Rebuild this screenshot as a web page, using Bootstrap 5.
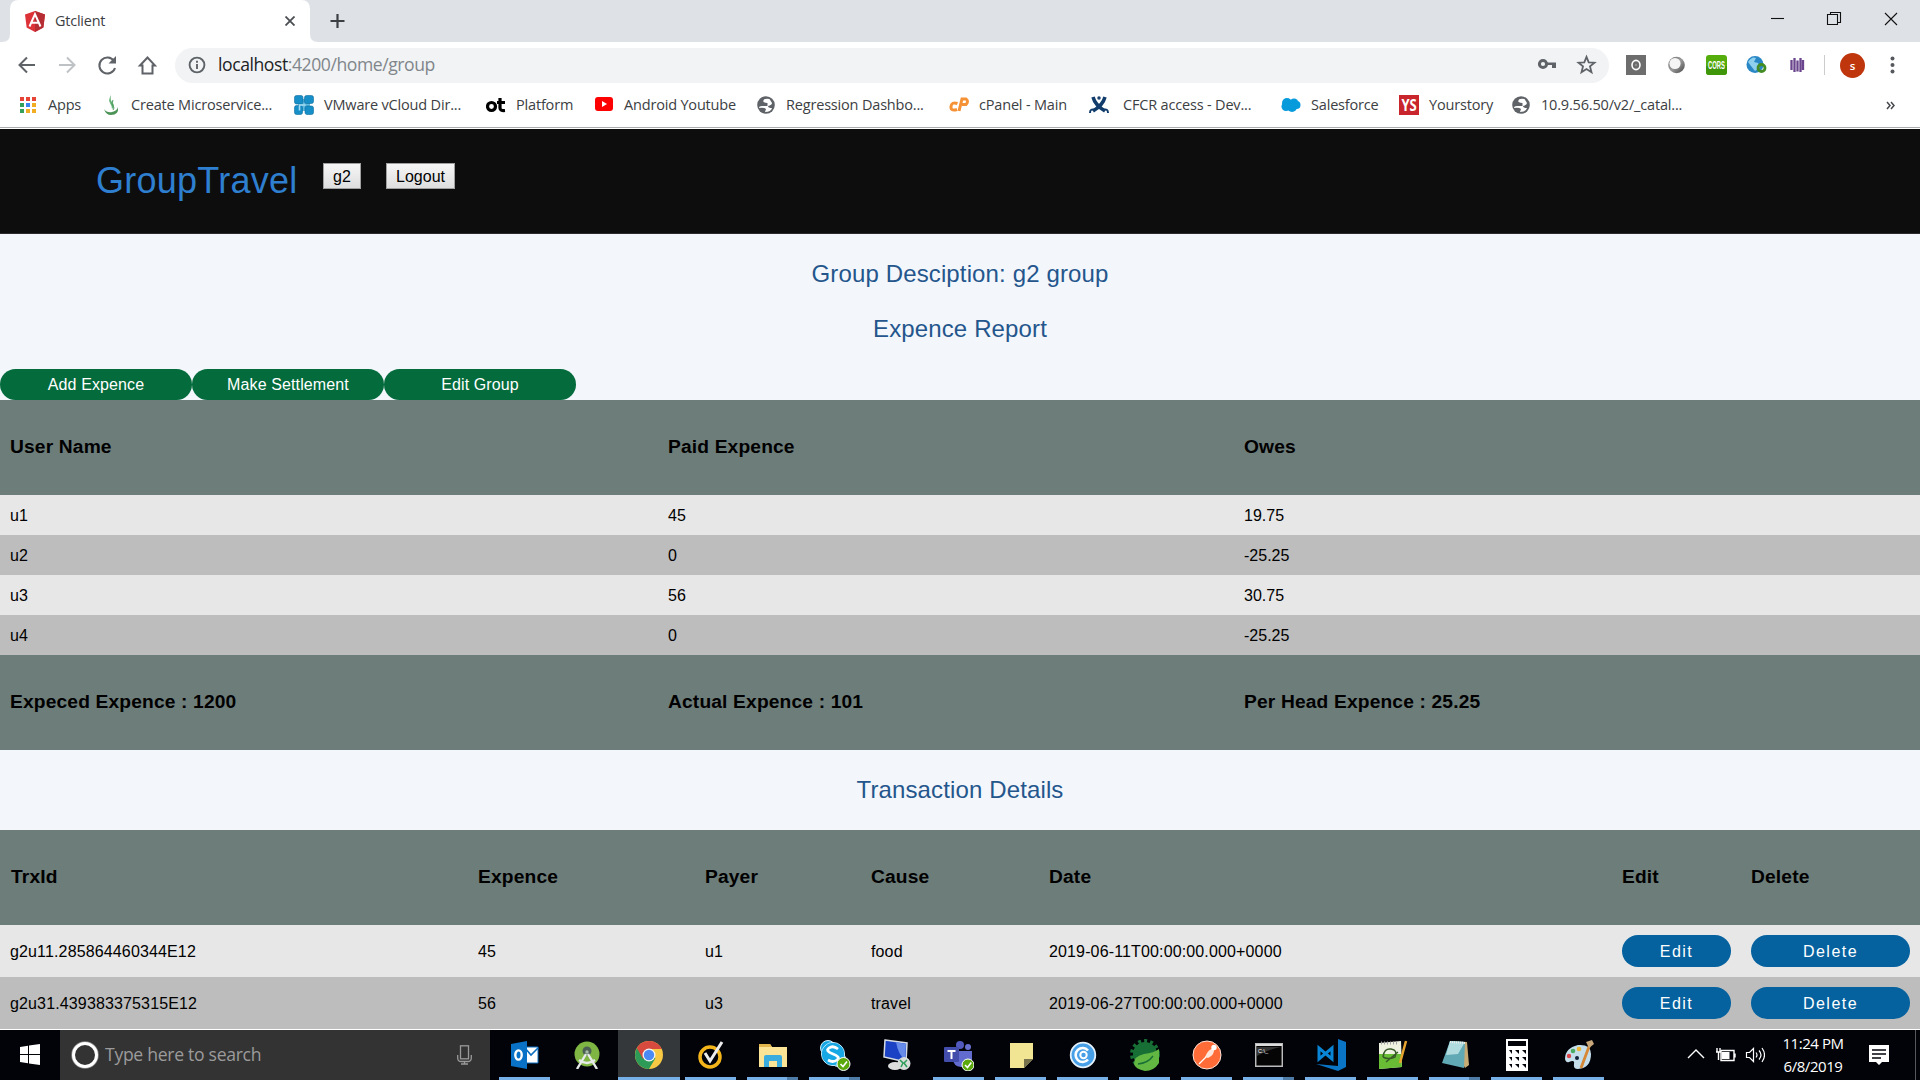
<!DOCTYPE html>
<html lang="en">
<head>
<meta charset="utf-8">
<title>Gtclient</title>
<link href="https://cdn.jsdelivr.net/npm/bootstrap@5.3.0/dist/css/bootstrap.min.css" rel="stylesheet">
<style>
body{width:1920px;height:1080px;overflow:hidden;background:#fff;font-family:"Liberation Sans",Arial,sans-serif;font-size:16px;color:#000;line-height:1.2}
svg{display:block;flex:none}
.ui{font-family:"Open Sans","Noto Sans",sans-serif;white-space:nowrap}
.strip{height:42px;background:#dee1e6;padding-left:2px}
.tabx{width:316px;height:42px;position:relative}
.tabx .shape{position:absolute;left:0;top:0}
.tabin{position:relative;height:42px;padding:0 23px 0 23px}
.tabin .ui{font-size:14.4px;color:#3c4043;letter-spacing:-.2px;margin-left:10px}
.winctl{padding-right:20px;padding-bottom:3px}
.tools{height:45px;padding-top:1px}
.navs{width:175px;padding-left:17px}
.omni{width:1434px;height:35px;border-radius:18px;background:#f1f3f4;padding:0 12px 0 13px}
.addr{font-size:17.6px;color:#80868b;letter-spacing:-.44px;margin-left:12px}
.addr b{font-weight:400;color:#202124}
.exts{padding-left:17px}
.exts>*{flex:none}
.avatar{width:25px;height:25px;background:#bf360c;color:#fff;font-size:14px;line-height:1}
.bms{height:40px;padding:0 0 4px 20px;font-size:14.5px;color:#3c4043}
.bms>div{display:flex;align-items:center;flex:none;letter-spacing:-.18px}
.bms>div>svg{margin-right:10px}
.bms>div:nth-child(1){width:84px}.bms>div:nth-child(2){width:190px}.bms>div:nth-child(3){width:192px}
.bms>div:nth-child(4){width:109px}.bms>div:nth-child(5){width:162px}.bms>div:nth-child(6){width:192px}
.bms>div:nth-child(7){width:140px}.bms>div:nth-child(8){width:192px}.bms>div:nth-child(9){width:118px}
.bms>div:nth-child(10){width:113px}.bms>div:nth-child(11){width:374px}
.rule{height:2px;background:#fff;border-top:1px solid #a9abad}
.site{height:105px;background:#0d0d0e;border-bottom:1px solid #2b2b2e;padding:29px 0 0 96px}
.brandname{font-size:36px;color:#2f7fd0;line-height:42px;width:227px;padding-top:2px;letter-spacing:.25px}
.gbtn{height:26px;width:38px;border:1px solid #a0a0a0;background:linear-gradient(#f6f6f6,#dedede);border-radius:0;padding:1px 0 0;margin-top:5px;font-size:16px;line-height:24px;color:#000}
.gbtn.out{width:69px;margin-left:25px}
.page{height:795px;background:#f3f7fc;overflow:hidden}
.ttl{font-size:24px;letter-spacing:.13px;color:#24568c;margin:0;text-align:center;height:54px;line-height:28px;font-weight:400}
.ttl.lead1{padding-top:26px;height:81px}
.ttl.lead2{padding-top:26px;height:80px}
.gr{width:192px;height:31px;border:0;border-radius:16px;background:#036b3c;color:#fff;font-size:16px;padding:0;line-height:31px;letter-spacing:.12px}
.gr:hover{background:#036b3c}
.grid{table-layout:fixed;width:1920px;margin:0;--bs-table-bg:transparent;--bs-table-color:#000;color:#000}
.grid th,.grid td{border:0;padding:1px 10px 0;vertical-align:middle}
.grid .hd>*{background:#6d7d7a;height:95px;font-size:19.2px;font-weight:700;letter-spacing:.16px;padding:0 10px 1px}
.tx .hd>:first-child{padding-left:11px}
.grid .od>*{background:#e8e7e7;height:40px}
.grid .ev>*{background:#bdbdbd;height:40px}
.grid.tx .od>*,.grid.tx .ev>*{height:52px;letter-spacing:.14px}
.grid.tx td:nth-child(n+6){padding-top:0}
.c1{width:658px}.c2{width:576px}
.t1{width:468px}.t2{width:227px}.t3{width:166px}.t4{width:178px}.t5{width:573px}.t6{width:129px}
.bl{display:block;width:100%;height:32px;border:0;border-radius:16px;background:#05629f;color:#fff;padding:1px 0 0;line-height:31px;font-size:16px;letter-spacing:1.5px}
.task{height:50px;background:#010308;margin-top:1px}
.find{width:430px;background:#333;padding:0 18px 0 11px}
.find .ui{font-size:17.6px;color:#9b9b9b;margin-left:6px;letter-spacing:-.3px}
.apps{padding-left:4px}
.ti{width:62px;height:50px;display:flex;align-items:center;justify-content:center;position:relative}
.ti.run::after{content:"";position:absolute;left:5px;bottom:0;width:51px;height:3px;background:#76b0e6}
.ti.two::after{background:linear-gradient(90deg,#76b0e6 40px,#4f7ba7 40px)}
.ti.act{background:#35383b}
.ti.act::after{left:0;width:62px}
.clock{font-size:15px;line-height:23px;color:#fff;text-align:center;letter-spacing:-.45px;width:64px}
</style>
<script src="https://cdn.jsdelivr.net/npm/bootstrap@5.3.0/dist/js/bootstrap.bundle.min.js"></script>
</head>
<body>
<div class="strip d-flex">
  <div class="tabx">
    <svg class="shape" width="316" height="42"><path d="M0 42q8 0 8-8V9q0-9 9-9h282q9 0 9 9v25q0 8 8 8z" fill="#fff"/></svg>
    <div class="tabin d-flex align-items-center">
      <svg width="20" height="21" viewBox="0 0 20 21"><path d="M10 0l10 3.600-1.600 12.800L10 21l-8.400-4.600L0 3.600z" fill="#dd3238"/><path d="M10 0l10 3.600-1.600 12.800L10 21z" fill="#b52c33"/><path d="M4.500 15.500L10 3.200l5.500 12.300M6.800 11.700h6.400" fill="none" stroke="#fff" stroke-width="2"/></svg>
      <span class="ui">Gtclient</span>
      <svg class="ms-auto" width="10" height="10"><path d="M.5.5l9 9M9.500.5l-9 9" stroke="#4a4d51" stroke-width="1.800"/></svg>
    </div>
  </div>
  <svg class="ms-2 my-auto" width="24" height="16"><path d="M11.500 1v14M4.500 8h14" stroke="#3c4043" stroke-width="2.200"/></svg>
  <div class="winctl d-flex ms-auto align-items-center">
    <svg width="134" height="32"><g fill="none" stroke="#111" stroke-width="1.100"><path d="M5 14.500h13"/><path d="M61.500 10.500h10v10h-10zM64.500 10.500v-2h10v10h-3"/><path d="M119 9l12 12M131 9l-12 12"/></g></svg>
  </div>
</div>
<div class="tools d-flex align-items-center">
  <div class="navs d-flex align-items-center">
    <svg width="140" height="24" fill="none" stroke="#5f6368" stroke-width="2"><path d="M18 12H3M10 4.500L2.500 12l7.500 7.500"/><path d="M42 12h15M50 4.500l7.500 7.500-7.500 7.500" stroke="#bfc2c5"/><path d="M97 8a8 8 0 1 0 1 7"/><path d="M99 3v7.500h-7.500z" fill="#5f6368" stroke="none"/><path d="M123 12.500L130.500 4.500l7.500 8h-2.500V20.500h-10V12.500z"/></svg>
  </div>
  <div class="omni d-flex align-items-center">
    <svg width="18" height="18" fill="none" stroke="#5f6368" stroke-width="1.900"><circle cx="9" cy="9" r="7.400"/><path d="M9 8v5M9 4.800v2"/></svg>
    <span class="ui addr"><b>localhost</b>:4200/home/group</span>
    <svg class="ms-auto" width="60" height="22"><circle cx="6" cy="10" r="3.600" fill="none" stroke="#5f6368" stroke-width="3"/><path d="M9 8.500h10v5.500h-4v-3H9z" fill="#5f6368"/><path d="M49.500 2.800l2.200 5.500 5.800.4-4.500 3.700 1.500 5.800-5-3.200-5 3.200 1.500-5.800-4.500-3.700 5.800-.4z" fill="none" stroke="#5f6368" stroke-width="1.800"/></svg>
  </div>
  <div class="exts d-flex align-items-center">
    <svg width="186" height="26"><defs><linearGradient id="ball" x1="0" y1="0" x2="1" y2="1"><stop offset="0" stop-color="#777"/><stop offset=".5" stop-color="#999"/><stop offset="1" stop-color="#444"/></linearGradient></defs>
      <path d="M0 3h20v20H0z" fill="#6d6d6d"/><ellipse cx="10" cy="13" rx="4" ry="4.600" fill="none" stroke="#fff" stroke-width="1.600"/><circle cx="10" cy="13" r=".8" fill="#bbb"/>
      <circle cx="50.500" cy="13" r="8.300" fill="url(#ball)"/><circle cx="49" cy="11.500" r="5.600" fill="#f5f5f5"/>
      <rect x="80" y="3" width="21" height="20" rx="3" fill="#55ad0b"/><path d="M80 14h21v6q0 3-3 3H83q-3 0-3-3z" fill="#3e9608"/><text x="90.500" y="17" text-anchor="middle" font-size="10" font-weight="700" fill="#fff" textLength="17" lengthAdjust="spacingAndGlyphs">CORS</text>
      <circle cx="129" cy="12.500" r="8.500" fill="#2a87c6"/><path d="M122 10q4-6 8-4l-2 4 4 1 2 4-5 4-4-5z" fill="#8fd0ec"/><circle cx="135.500" cy="16" r="3.500" fill="none" stroke="#438c24" stroke-width="2.800"/>
      <g stroke="#6a458d" stroke-width="2.300"><path d="M165.500 8v10M168.500 6v14M171.500 8.500v11M174.500 6v14M177 8v10"/></g>
    </svg>
    <svg width="28" height="26"><path d="M12.500 3v20" stroke="#ccc" stroke-width="1"/></svg>
    <div class="avatar rounded-circle d-flex align-items-center justify-content-center ui"><svg width="25" height="25"><text x="12.500" y="16.500" text-anchor="middle" font-size="11.500" font-weight="600" fill="#fff">s</text></svg></div>
    <svg width="30" height="20" fill="#55595d"><circle cx="27.500" cy="3.500" r="2"/><circle cx="27.500" cy="10" r="2"/><circle cx="27.500" cy="16.500" r="2"/></svg>
  </div>
</div>
<div class="bms ui d-flex align-items-center">
  <div><svg width="18" height="18"><g fill="#e74438"><path d="M0 1h4v4H0zM6 1h4v4H6zM12 1h4v4h-4z"/></g><path d="M0 7h4v4H0zM0 13h4v4H0z" fill="#34a05a"/><path d="M6 7h4v4H6z" fill="#3b83ee"/><path d="M6 13h4v4H6zM12 7h4v4h-4zM12 13h4v4h-4z" fill="#f2ae22"/></svg>Apps</div>
  <div><svg width="17" height="20"><path d="M7 0q-3 5-1 8t2 6q4-3 0-7-2-2-1-7z" fill="#66b477"/><path d="M9 5q-2 4 0 6t0 4" fill="none" stroke="#4b9a5b"/><path d="M0 14q3 4 8 3t6-5q1 8-7 8-5 0-7-6z" fill="#4c9356"/></svg>Create Microservice...</div>
  <div><svg width="20" height="20"><path d="M4 4h12v12H4z" fill="#5fb8df"/><g fill="#168fc8" stroke="#0d6d9c" stroke-width=".6"><rect x=".5" y=".5" width="8.500" height="8.500" rx="2"/><rect x="10.500" y=".5" width="9" height="8" rx="2"/><rect x=".5" y="10.500" width="8" height="9" rx="2"/><rect x="11" y="11" width="8.500" height="8.500" rx="2"/></g><path d="M5.500 15.500V10h6" fill="none" stroke="#a5daf0" stroke-width="1.600"/></svg>VMware vCloud Dir...</div>
  <div><svg width="20" height="18"><g fill="none" stroke="#000" stroke-width="3.200"><circle cx="5.500" cy="10.500" r="4"/><path d="M14 2v10q0 3 5 2.500M11 6.500h8"/></g></svg>Platform</div>
  <div><svg width="19" height="15"><rect width="18" height="14" rx="3" fill="#f00"/><path d="M7 4l5 3-5 3z" fill="#fff"/></svg>Android Youtube</div>
  <div><svg width="19" height="18"><circle cx="9" cy="9" r="8.800" fill="#5f6368"/><path d="M12.500 3q-7-1-6 3 2 1 4 1v3H5q-3 0-3 2 5-1 7 1l-1 3q6 0 7-4-4 0-4-2 4-1 4-3z" fill="#fff"/></svg>Regression Dashbo...</div>
  <div><svg width="20" height="16" fill="none" stroke="#f59235" stroke-width="3"><path d="M8.500 6.500q-6-2-6.500 3t6 3M10 14l3-12h4q3 2 0 5.500h-4"/></svg>cPanel - Main</div>
  <div><svg width="24" height="20" fill="none" stroke="#123c6b"><path d="M4 2q2 8 12 14M16 2q-2 8-12 14" stroke-width="3.500"/><path d="M6 15q-5-2-5 3M14 15q5-2 5 3" stroke-width="2"/><circle cx="10" cy="3" r="1" stroke-width="1.500"/></svg>CFCR access - Dev...</div>
  <div><svg width="20" height="16" fill="#079bdc"><circle cx="6" cy="6" r="5"/><circle cx="13" cy="6" r="4.500"/><circle cx="5" cy="9.500" r="4.500"/><circle cx="11" cy="10" r="5"/><circle cx="15.500" cy="8" r="4"/></svg>Salesforce</div>
  <div><svg width="20" height="20"><path d="M0 0h20v20H0z" fill="#c9252c"/><text x="10" y="16" text-anchor="middle" font-size="16" font-weight="700" fill="#fff" textLength="15" lengthAdjust="spacingAndGlyphs">YS</text></svg>Yourstory</div>
  <div><svg width="19" height="18"><circle cx="9" cy="9" r="8.800" fill="#5f6368"/><path d="M12.500 3q-7-1-6 3 2 1 4 1v3H5q-3 0-3 2 5-1 7 1l-1 3q6 0 7-4-4 0-4-2 4-1 4-3z" fill="#fff"/></svg>10.9.56.50/v2/_catal...</div>
  <div><svg width="10" height="9" fill="none" stroke="#44484c" stroke-width="1.500"><path d="M1 1l3 3.500L1 8M5 1l3 3.500L5 8"/></svg></div>
</div>
<div class="rule"></div>
<header class="site d-flex align-items-start">
  <div class="brandname">GroupTravel</div>
  <button class="btn gbtn">g2</button>
  <button class="btn gbtn out">Logout</button>
</header>
<main class="page">
  <h2 class="ttl lead1">Group Desciption: g2 group</h2>
  <h2 class="ttl">Expence Report</h2>
  <div class="d-flex"><button class="btn gr">Add Expence</button><button class="btn gr">Make Settlement</button><button class="btn gr">Edit Group</button></div>
  <table class="table grid">
    <colgroup><col class="c1"><col class="c2"><col></colgroup>
    <tr class="hd"><th>User Name</th><th>Paid Expence</th><th>Owes</th></tr>
    <tr class="od"><td>u1</td><td>45</td><td>19.75</td></tr>
    <tr class="ev"><td>u2</td><td>0</td><td>-25.25</td></tr>
    <tr class="od"><td>u3</td><td>56</td><td>30.75</td></tr>
    <tr class="ev"><td>u4</td><td>0</td><td>-25.25</td></tr>
    <tr class="hd"><th>Expeced Expence : 1200</th><th>Actual Expence : 101</th><th>Per Head Expence : 25.25</th></tr>
  </table>
  <h2 class="ttl lead2">Transaction Details</h2>
  <table class="table grid tx">
    <colgroup><col class="t1"><col class="t2"><col class="t3"><col class="t4"><col class="t5"><col class="t6"><col></colgroup>
    <tr class="hd"><th>TrxId</th><th>Expence</th><th>Payer</th><th>Cause</th><th>Date</th><th>Edit</th><th>Delete</th></tr>
    <tr class="od"><td>g2u11.285864460344E12</td><td>45</td><td>u1</td><td>food</td><td>2019-06-11T00:00:00.000+0000</td><td><button class="btn bl">Edit</button></td><td><button class="btn bl">Delete</button></td></tr>
    <tr class="ev"><td>g2u31.439383375315E12</td><td>56</td><td>u3</td><td>travel</td><td>2019-06-27T00:00:00.000+0000</td><td><button class="btn bl">Edit</button></td><td><button class="btn bl">Delete</button></td></tr>
  </table>
</main>
<footer class="task d-flex">
  <svg width="60" height="50"><path d="M20 17l8-1.200V24h-8zM29 15.600l11-1.600v10H29zM20 25h8V33.200L20 32zM29 25h11V35l-11-1.600z" fill="#fff"/></svg>
  <div class="find d-flex align-items-center">
    <svg width="28" height="28"><circle cx="14" cy="14" r="12.500" fill="none" stroke="#888" stroke-width="2.500"/><circle cx="14" cy="14" r="11.500" fill="none" stroke="#fff" stroke-width="3"/></svg>
    <span class="ui">Type here to search</span>
    <svg class="ms-auto" width="15" height="20" fill="none" stroke="#999" stroke-width="1.300"><rect x="3.500" y=".8" width="8" height="13"/><path d="M.7 10v3q0 3.500 3.500 3.500h6.600q3.500 0 3.500-3.500v-3M7.500 16.500V19M4 19h7"/></svg>
  </div>
  <div class="apps d-flex">
    <div class="ti run"><svg width="28" height="28"><path d="M12 6h15v16H12z" fill="#fff" stroke="#0a6fc2"/><path d="M14 7l6 7 7-7" fill="none" stroke="#0a6fc2" stroke-width="1.600"/><path d="M0 3l16-3v28L0 25z" fill="#0a72c6"/><ellipse cx="7.500" cy="14" rx="3.200" ry="4.600" fill="none" stroke="#fff" stroke-width="2.400"/></svg></div>
    <div class="ti"><svg width="28" height="28"><circle cx="14" cy="13" r="12.500" fill="#7fb543"/><circle cx="14" cy="10" r="4.500" fill="#4c5f55"/><path d="M13 13L4 28M15 13l9 15M6 19q8 6 16 0" fill="none" stroke="#e6eae8" stroke-width="2.400"/><circle cx="14" cy="11" r="1.700" fill="#a8bca7"/></svg></div>
    <div class="ti run act"><svg width="28" height="28" viewBox="-14 -14 28 28"><circle r="14" fill="#f7c844"/><path d="M-12.100-7A14 14 0 0 0 0 14L6.500 3 0 0z" fill="#2d9b57"/><path d="M-12.100-7A14 14 0 0 1 12.600-6H0L-6 4z" fill="#d84a3e"/><circle r="6.500" fill="#f4f4f4"/><circle r="5.200" fill="#4a8af4"/></svg></div>
    <div class="ti run"><svg width="28" height="28"><circle cx="13" cy="16" r="10" fill="none" stroke="#f4b51b" stroke-width="3.500"/><path d="M8 12l5 8L25 1" fill="none" stroke="#ededed" stroke-width="3"/></svg></div>
    <div class="ti run two"><svg width="28" height="26"><path d="M0 2h11l2 3h15v20H0z" fill="#fbe496"/><path d="M0 2h11l2 3h-13z" fill="#e0b64d"/><path d="M5 25V15q0-2 2-2h14q2 0 2 2v10h-5v-6h-8v6z" fill="#3aacde"/></svg></div>
    <div class="ti run two"><svg width="32" height="32"><g fill="#16a7e4" stroke="#d7f1fc" stroke-width="1"><circle cx="9" cy="9" r="7.500"/><circle cx="19" cy="20" r="7.500"/><circle cx="14" cy="15" r="11.500"/></g><circle cx="14" cy="15" r="11" fill="#16a7e4"/><path d="M19 10q-5-4-9-1t4 6 4 6-9 0" fill="none" stroke="#fff" stroke-width="2.800"/><circle cx="24.500" cy="25" r="6.500" fill="#5ba80c" stroke="#fff"/><path d="M21.500 25l2.500 2.500 4-5" fill="none" stroke="#fff" stroke-width="1.600"/></svg></div>
    <div class="ti"><svg width="30" height="32"><path d="M3 1l22 3-1 19-22-5z" fill="#1b41c5" stroke="#d6dce4" stroke-width="1.500"/><path d="M14 3l10 2-1 16q-7-6-9-18z" fill="#668be8"/><ellipse cx="13" cy="27" rx="7" ry="4" fill="#ddd"/><circle cx="22" cy="24.500" r="6.500" fill="#d8ddda"/><path d="M18 21l3 3-2 4M25 21l-3 3 3 4" stroke="#2f9d59" fill="none" stroke-width="1.500"/></svg></div>
    <div class="ti run"><svg width="30" height="32"><circle cx="16" cy="6" r="4" fill="#5159bd"/><circle cx="24" cy="8" r="3" fill="#6871ce"/><path d="M9 12h19v9q-4 8-11 7-8-1-8-8z" fill="#626bce"/><rect y="8" width="15" height="15" rx="1" fill="#424dac"/><path d="M3.500 12h8M7.500 12v8" stroke="#fff" stroke-width="2"/><circle cx="24" cy="26" r="6" fill="#5ba80c" stroke="#fff"/><path d="M21 26l2.500 2.500 3.800-5" fill="none" stroke="#fff" stroke-width="1.600"/></svg></div>
    <div class="ti run"><svg width="23" height="25"><path d="M0 0h23v16l-9 9H0z" fill="#f1e493"/><path d="M14 25v-9h9z" fill="#77724e"/></svg></div>
    <div class="ti run"><svg width="28" height="28"><circle cx="14" cy="14" r="12.300" fill="#47a0e7" stroke="#e4f1fb" stroke-width="1.800"/><path d="M19 9.500a7 7 0 1 0 0 9" fill="none" stroke="#fff" stroke-width="2.600"/><circle cx="14.500" cy="14" r="3.200" fill="none" stroke="#fff" stroke-width="2"/></svg></div>
    <div class="ti run"><svg width="30" height="32"><circle cx="15" cy="15" r="12" fill="#176f35"/><circle cx="15" cy="15" r="13" fill="none" stroke="#176f35" stroke-width="4" stroke-dasharray="3 3"/><path d="M29 10v14q-5 8-14 8Q5 30 4 25q0-8 10-10 10-1 15-5z" fill="#62b743"/><path d="M8 25q10-1 15-8" fill="none" stroke="#176f35" stroke-width="1.400"/></svg></div>
    <div class="ti run"><svg width="30" height="30"><circle cx="15" cy="15" r="14" fill="#ff6c37" stroke="#ffe4d8"/><path d="M7 24l8-8" stroke="#fff" stroke-width="1.300"/><path d="M13 17q3-8 9-9 1 7-6 10z" fill="#ffe7dc"/><circle cx="22" cy="7.500" r="2.700" fill="#fff"/></svg></div>
    <div class="ti run two"><svg width="28" height="24"><path d="M.7.7h26.600v22.600H.7z" fill="#050505" stroke="#bbb" stroke-width="1.500"/><path d="M1 1h26v2H1z" fill="#ddd"/><path d="M2 4h24q-12 2-24 9z" fill="#333"/><text x="3" y="9.500" font-size="5.500" fill="#fff">C:\_</text></svg></div>
    <div class="ti run"><svg width="30" height="32"><path d="M22 0l8 3v25l-8 4-22-7 22 2z" fill="#0a74c5"/><path d="M3 9v11l13-11v11z" fill="none" stroke="#0a84d4" stroke-width="3"/></svg></div>
    <div class="ti run two2"><svg width="30" height="30"><path d="M1 3l22-2 1 26-23 2z" fill="#eef2e1"/><path d="M1 14h22l1 13-23 2z" fill="#68bd35"/><path d="M3 3h18" stroke="#a1a1a1" stroke-width="3" stroke-dasharray="1 2"/><path d="M5 17q1-9 8-8t4 8q-7 3-12 0M8 22l12-10" fill="none" stroke="#365b27" stroke-width="1.500"/><path d="M28 1l-6 22" stroke="#e7a42e" stroke-width="2.500"/></svg></div>
    <div class="ti run two"><svg width="28" height="30"><path d="M10 1l16 1 2 23-4 3z" fill="#c7aa74"/><path d="M9 1l15 1-1 26-22-5z" fill="#61a9b5"/><path d="M9 1l15 1-7 12-12 1z" fill="#b0dce0"/><path d="M9 2l15 1" stroke="#eee" stroke-width="2" stroke-dasharray="1 1"/></svg></div>
    <div class="ti run"><svg width="22" height="32"><path d="M0 0h22v32H0z" fill="#fff"/><path d="M2 2h18v5H2z" fill="#010308"/><g fill="#010308"><path d="M3 11h3v4zM9 11h4v4zM16 11h4v4zM3 18h3v4zM9 18h4v4zM16 18h4v4zM3 25h3v4zM9 25h4v4zM16 25h4v4z"/></g></svg></div>
    <div class="ti run"><svg width="30" height="30"><path d="M1 19q0-11 13-14 13-1 13 9 0 14-13 15-5 0-4-5 1-5-5-2-3 1-4-3z" fill="#c5deec"/><circle cx="5" cy="16" r="2.200" fill="#db4549"/><circle cx="9" cy="11" r="2.300" fill="#4cab62"/><circle cx="15" cy="9" r="2.300" fill="#edb635"/><circle cx="13" cy="18" r="2" fill="#14233a"/><path d="M26 4l-9 24" stroke="#d78836" stroke-width="2.800"/><path d="M22 2l6-2 2 4-5 4z" fill="#c8a77a"/></svg></div>
  </div>
  <div class="d-flex align-items-center ms-auto">
    <svg width="80" height="24" fill="none" stroke="#fff" stroke-width="1.400"><path d="M3 15l8-8 8 8"/><path d="M36 7.500h13v10H36zM50 10.500v4"/><path d="M36.500 9h8v7h-8z" fill="#fff" stroke="none"/><path d="M32 5v4M35 5v4M31 9h5M33.500 9v8"/><path d="M61.500 9.500h3l4-4v13l-4-4h-3zM71 9.500q2 2.500 0 5M74 7.500q4 4.500 0 9M77 5q5 7 0 14" stroke-width="1.200"/></svg>
    <div class="clock ui ms-3"><div>11:24 PM</div><div>6/8/2019</div></div>
    <svg width="66" height="50"><path d="M24 15h20v17h-7l-3 3-3-3h-7z" fill="#fff"/><path d="M27 20h14M27 24h14M27 28h9" stroke="#010308" stroke-width="1.300"/></svg>
    <svg width="9" height="50"><path d="M4.500 0v50" stroke="#55575b"/></svg>
  </div>
</footer>
</body>
</html>
